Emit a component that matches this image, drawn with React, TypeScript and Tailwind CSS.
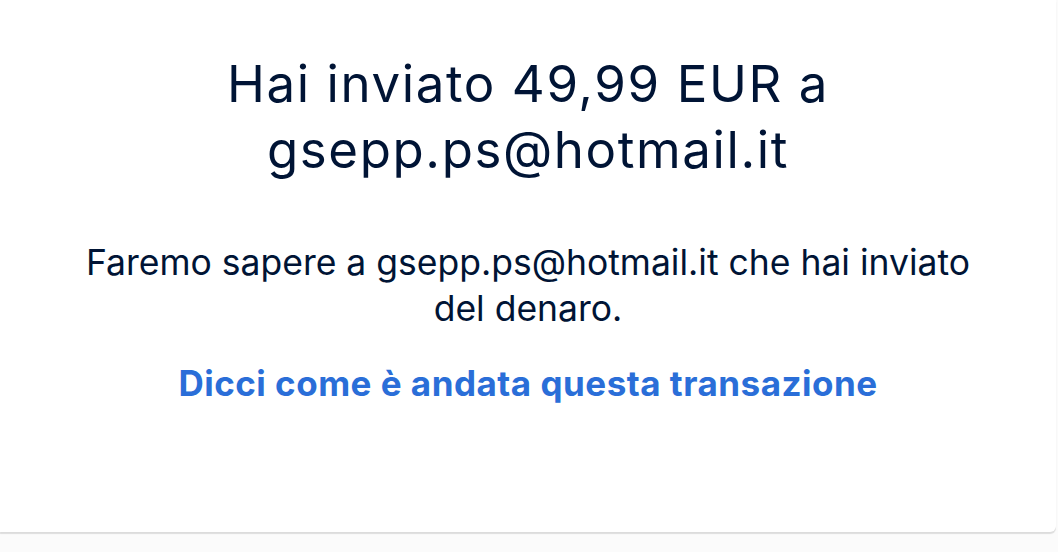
import React from 'react';

const App: React.FC = () => {
  return (
    <div className="min-h-[552px] w-[1058px] bg-[#fbfbfb] font-['Inter',sans-serif]">
      <div className="mr-[2px] h-[532px] rounded-br-[6px] bg-white shadow-[0_2px_1px_rgba(0,0,0,0.12)]">
        <div className="flex flex-col items-center px-10 pt-[51px] text-center">
          <h1 className="max-w-[680px] text-[51px] font-normal leading-[66px] tracking-[1.6px] text-[#001435]">
            Hai inviato 49,99 EUR a gsepp.ps@hotmail.it
          </h1>
          <p className="mt-[57px] max-w-[920px] text-[35.5px] leading-[46px] text-[#001435]">
            Faremo sapere a gsepp.ps@hotmail.it che hai inviato del denaro.
          </p>
          <a href="#" className="mt-[30px] text-[35px] font-bold leading-[42px] tracking-[0.5px] text-[#2a6ed8]">
            Dicci come è andata questa transazione
          </a>
        </div>
      </div>
    </div>
  );
};

export default App;
